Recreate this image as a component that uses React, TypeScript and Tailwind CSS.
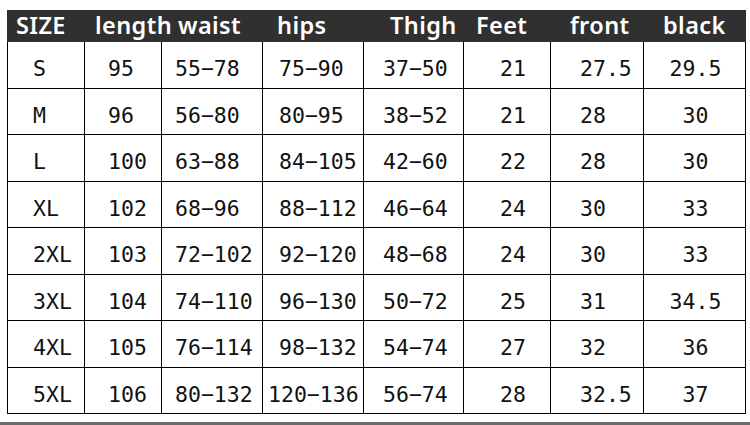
const heads = [
  { label: "SIZE", w: "w-[79px]" },
  { label: "length", w: "w-[83px]" },
  { label: "waist", w: "w-[99px]" },
  { label: "hips", w: "w-[113px]" },
  { label: "Thigh", w: "w-[86px]" },
  { label: "Feet", w: "w-[94px]" },
  { label: "front", w: "w-[93px]" },
  { label: "black", w: "" },
]

// padding for each column, the last one is centred
const colPad = ["pl-[25px]", "pl-[23px]", "pl-[13px]", "pl-[16px]", "pl-[19px]", "pl-[36px]", "pl-[29px]", "justify-center pl-[2px]"]

const rows = [
  ["S", "95", "55−78", "75−90", "37−50", "21", "27.5", "29.5"],
  ["M", "96", "56−80", "80−95", "38−52", "21", "28", "30"],
  ["L", "100", "63−88", "84−105", "42−60", "22", "28", "30"],
  ["XL", "102", "68−96", "88−112", "46−64", "24", "30", "33"],
  ["2XL", "103", "72−102", "92−120", "48−68", "24", "30", "33"],
  ["3XL", "104", "74−110", "96−130", "50−72", "25", "31", "34.5"],
  ["4XL", "105", "76−114", "98−132", "54−74", "27", "32", "36"],
  ["5XL", "106", "80−132", "120−136", "56−74", "28", "32.5", "37"],
]

export default function App() {
  return (
    <div className="w-[750px] h-[425px] bg-white overflow-hidden pt-[10px]">
      <div className="ml-[7px] w-[739px]">
        {/* header band */}
        <div
          className="h-[32px] bg-[#303030] text-white flex items-center pl-[9px] text-[23.5px] tracking-[0.4px] font-semibold leading-none"
          style={{ fontFamily: '"Noto Sans", "Open Sans", sans-serif' }}
        >
          {heads.map((h) => (
            <span key={h.label} className={h.w}>
              {h.label}
            </span>
          ))}
        </div>

        {/* size table */}
        <div
          className="h-[372px] bg-black border-x border-b border-black grid gap-px grid-cols-[76px_76px_100px_100px_99px_86px_92px_101px] grid-rows-[repeat(8,1fr)] text-[21.5px] text-[#111]"
          style={{ fontFamily: '"DejaVu Sans Mono", "Liberation Mono", monospace' }}
        >
          {rows.map((r, i) =>
            r.map((v, j) => (
              <div
                key={i + "-" + j}
                className={
                  "bg-white flex items-center pt-[9px] whitespace-nowrap " +
                  (j === 3 && v.length > 6 ? "pl-[5px]" : colPad[j])
                }
              >
                {v}
              </div>
            ))
          )}
        </div>
      </div>

      {/* grey rule along the bottom */}
      <div className="mt-[8px] h-[3px] bg-[#6b6b6b]" />
    </div>
  )
}
